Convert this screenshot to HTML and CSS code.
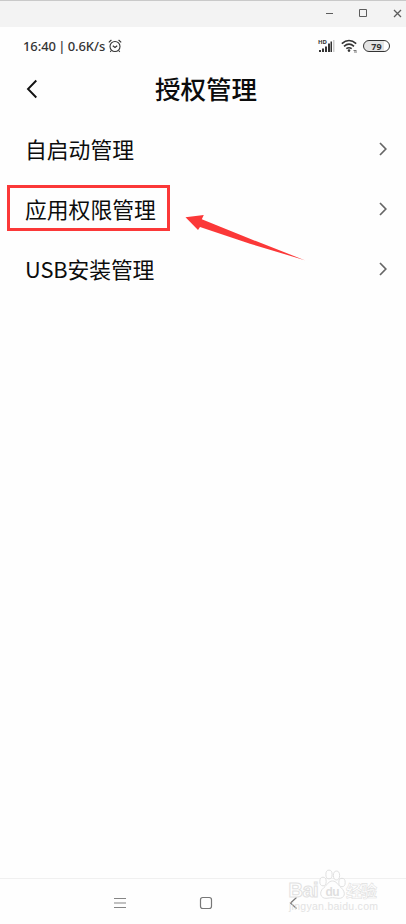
FILE: index.html
```html
<!DOCTYPE html>
<html lang="zh-CN">
<head>
<meta charset="utf-8">
<title>授权管理</title>
<link rel="stylesheet" href="styles.css">
</head>
<body>
<div class="window">
  <div class="titlebar">
    <svg width="90" height="26" viewBox="316 1 90 26" fill="none" stroke="#5c5c5c">
      <path d="M326 13.500h7"/><path d="M359.500 9.500h7v7h-7z"/><path d="M394 10l7 7M401 10l-7 7" stroke-width="1.300"/>
    </svg>
  </div>
  <div class="status">
    <span class="clock">16:40 | 0.6K/s</span>
    <svg class="alarm" width="14" height="14" viewBox="0 0 14 14" fill="none" stroke="#333" stroke-width="1.100">
      <circle cx="7" cy="7.500" r="5"/><path d="M.8 3.400L3.400 1M13.200 3.400L10.600 1M4.800 6.800L7 8.500l2.200-1.700M3.400 11.500l-1.200 1.300M10.600 11.500l1.200 1.300"/>
    </svg>
    <div class="indicators">
      <div class="signal">
        <span class="hd">HD</span>
        <svg width="16" height="12" viewBox="0 0 16 12" fill="#333"><path d="M0 10h2v2H0zM3 8.500h2V12H3zM6 6.500h2V12H6zM9 3.500h2V12H9zM11.500 1.500h1.500V12h-1.500z"/><path fill="#ccc" d="M14 0h1.500v12H14z"/></svg>
      </div>
      <svg class="wifi" width="17" height="14" viewBox="0 0 17 14" fill="none" stroke="#333" stroke-width="1.600">
        <path d="M.8 4.700Q8 -1.700 15.200 4.700M3 7.300Q8 3 13 7.300M5.300 9.700Q8 7.700 10.700 9.700"/><circle cx="8" cy="11.600" r="1.300" fill="#333" stroke="none"/><path d="M12.500 11.500h3M13 13h3" stroke="#777" stroke-width="1"/>
      </svg>
      <span class="battery"><b>79</b></span>
    </div>
  </div>
  <header class="header">
    <svg width="12" height="20" viewBox="0 0 12 20" fill="none" stroke="#111" stroke-width="1.900"><path d="M10.300 1.500L2 10l8.300 8.500"/></svg>
    <h1>授权管理</h1>
  </header>
  <main class="list">
    <div class="row"><span class="label">自启动管理</span><svg class="chevron" viewBox="0 0 10 14"><path d="M2 1l5.800 6L2 13"/></svg></div>
    <div class="row"><span class="label">应用权限管理</span><svg class="chevron" viewBox="0 0 10 14"><path d="M2 1l5.800 6L2 13"/></svg>
      <div class="highlight"></div>
      <svg class="arrow" width="120" height="48" viewBox="185 214 120 48"><path fill="#fb3838" d="M185.500 217.200L203.800 215l-2 4.300 50 20.200L304.800 260.200 250 243.800l-50-16.800-2 3z"/></svg>
    </div>
    <div class="row"><span class="label latin">USB安装管理</span><svg class="chevron" viewBox="0 0 10 14"><path d="M2 1l5.800 6L2 13"/></svg></div>
  </main>
  <nav class="nav">
    <svg width="406" height="45" viewBox="0 879 406 45" fill="none" stroke="#858585">
      <path d="M114 898.500h12M114 903h12M114 907.500h12"/>
      <rect x="200.500" y="897.500" width="11" height="11" rx="2.200" stroke="#777" stroke-width="1.200"/>
      <path d="M296.500 897.500l-6 5.500 6 5.500" stroke="#777" stroke-width="1.200"/>
    </svg>
    <div class="watermark">
      <svg width="100" height="48" viewBox="285 868 100 48" fill="#fff" stroke="#dadada" stroke-width="1">
        <ellipse cx="323" cy="881.500" rx="3.200" ry="4.300"/><ellipse cx="329" cy="874.500" rx="3.100" ry="4.400"/><ellipse cx="336.500" cy="875.500" rx="3.100" ry="4.400"/><ellipse cx="342" cy="882.500" rx="3.200" ry="4.200"/>
        <path d="M332.500 881c-4 0-5.500 4-8.500 6.500-6 5-3 11 2 10.800 3-.1 4-.6 6.500-.6s3.500.5 6.500.6c5 .2 8-5 2-10.800-3-2.500-4.500-6.500-8.500-6.500z"/>
        <g class="brand"><text x="288.500" y="897" font-size="20" textLength="30">Bai</text><text class="du" x="325.500" y="896" font-size="12" textLength="14">du</text><text class="cjk" x="346" y="897" font-size="16" textLength="31">经验</text></g>
        <text class="domain" x="289" y="909.500" font-size="10.500" textLength="89">jingyan.baidu.com</text>
      </svg>
    </div>
  </nav>
</div>
</body>
</html>
```
FILE: styles.css
```css
* { box-sizing: border-box; }
body { margin: 0; background: #fefefe; color: #0c0c0c; font-family: "Noto Sans", "Noto Sans CJK SC", sans-serif; }
svg { display: block; flex: none; }
.window { width: 406px; height: 924px; display: flex; flex-direction: column; overflow: hidden; }
.titlebar { height: 27px; border-top: 1px solid #c9c9c9; background: #f3f3f3; display: flex; justify-content: flex-end; }
.status { height: 38px; padding: 0 16px 0 23px; display: flex; align-items: center; color: #333; }
.clock { font-size: 13px; font-weight: 500; line-height: 18px; word-spacing: -1px; letter-spacing: -.07px; white-space: nowrap; }
.alarm { margin-left: 3px; }
.indicators { margin-left: auto; display: flex; align-items: center; }
.signal { position: relative; width: 16px; margin-right: 6px; }
.hd { position: absolute; left: -1px; top: -1px; font-size: 6px; line-height: 6px; font-weight: 700; }
.wifi { margin-right: 5px; }
.battery { width: 27px; height: 12px; border: 1.5px solid #333; border-radius: 6px; display: flex; align-items: center; justify-content: center; font-size: 9px; line-height: 9px; background: linear-gradient(90deg, #e4e4e4 80%, #fff 80%); }
.header { height: 55px; padding: 0 20px 7px 26px; display: grid; grid-template-columns: 12px 1fr 12px; align-items: center; }
.header h1 { margin: 0; text-align: center; font-size: 25.500px; font-weight: 500; line-height: 36px; }
.list { flex: 1; }
.row { position: relative; height: 60px; padding: 0 18px 0 25px; display: flex; align-items: center; justify-content: space-between; }
.label { font-size: 21.800px; line-height: 32px; white-space: nowrap; }
.latin { margin-bottom: 2px; font-family: "Noto Sans CJK SC", sans-serif; letter-spacing: -.1px; }
.chevron { width: 10px; height: 14px; margin-bottom: 2px; fill: none; stroke: #666; stroke-width: 1.700; }
.highlight { position: absolute; left: 7px; top: 5px; width: 163px; height: 46px; border: 3px solid #fb3838; }
.arrow { position: absolute; left: 185px; top: 34px; }
.nav { position: relative; height: 46px; border-top: 1px solid #f0f0f0; }
.watermark { position: absolute; left: 285px; top: -11px; opacity: .8; }
.brand { font-family: "Liberation Sans", "Noto Sans CJK SC", sans-serif; font-weight: 700; }
.du { fill: #d8d8d8; stroke: none; }
.cjk { stroke-width: .6px; }
.domain { font-family: "Liberation Sans", sans-serif; fill: #dcdcdc; stroke: none; }
```
